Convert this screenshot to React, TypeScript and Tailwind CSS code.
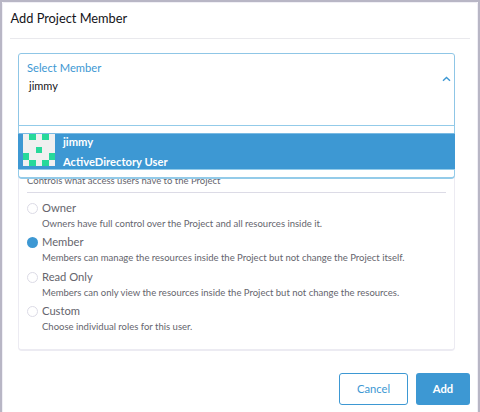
const roles = [
  { name: "Owner", text: "Owners have full control over the Project and all resources inside it." },
  { name: "Member", text: "Members can manage the resources inside the Project but not change the Project itself." },
  { name: "Read Only", text: "Members can only view the resources inside the Project but not change the resources." },
  { name: "Custom", text: "Choose individual roles for this user." },
];

function Avatar() {
  const cells = [[1, 0], [3, 0], [2, 2], [0, 3], [4, 3], [1, 4], [3, 4]];
  return (
    <svg className="ml-1 h-8 w-8 shrink-0" viewBox="0 0 5 5" shapeRendering="crispEdges">
      <rect width="5" height="5" fill="#f0f0f0" />
      {cells.map(([x, y]) => (
        <rect key={`${x}-${y}`} x={x} y={y} width="1" height="1" fill="#27d99b" />
      ))}
    </svg>
  );
}

function MemberSelect() {
  return (
    <div className="relative h-[73px] rounded-t-[3px] border border-[#8fc6e6] bg-white pl-2 pt-[6px]">
      <div className="text-[11.2px] leading-4 text-[#3d98d3]">Select Member</div>
      <div className="mt-[2px] pl-[2px] text-[11px] leading-4 text-[#141419]">jimmy</div>
      <svg className="absolute right-[3px] top-[22px] h-[6px] w-[9px]" viewBox="0 0 9 6" fill="none" stroke="#3d98d3" strokeWidth="1.4">
        <path d="M1 4.7 L4.5 1.4 L8 4.7" />
      </svg>
      <div className="absolute -left-px -right-px top-[71px] z-10 h-[54px] rounded-b-[4px] border border-b-2 border-[#93cbe9] bg-white pt-[7px]">
        <div className="-mx-px flex h-[37px] border-y border-[#79bae3] border-b-[#93cbe9] bg-[#3d98d3] pl-px text-white">
          <Avatar />
          <div className="ml-2 font-bold">
            <div className="-mt-px text-[11.2px] leading-[17px]">jimmy</div>
            <div className="mt-[3px] text-[11.2px] leading-[17px]">ActiveDirectory User</div>
          </div>
        </div>
      </div>
    </div>
  );
}

export default function App() {
  return (
    <main className="h-[412px] w-[480px] overflow-hidden border-2 border-b-0 border-[#b8b6c5] bg-white font-['Lato',sans-serif]">
      <div className="h-[412px] rounded-t-[2px] px-2 shadow-[inset_0_0_0_1px_#f0eff5]">
        <h1 className="h-[37px] border-b border-[#e9e9ed] pl-[0.5px] pt-[7px] text-[12.8px] leading-[18px] text-[#141419]">Add Project Member</h1>
        <div className="ml-2 mr-[15px] mt-[14px]">
          <MemberSelect />
          <section className="h-[225px] rounded-b-[4px] border border-b-2 border-t-0 border-[#ecebf2] px-2 pt-[47px] text-[#65656d]">
            <p className="h-[20px] border-b border-[#dcdbe6] text-[9.5px] leading-[15px]">Controls what access users have to the Project</p>
            <div className="pt-[7px]">
              {roles.map((role) => (
                <label key={role.name} className="flex h-[34.4px]">
                  <span className={role.name === "Member" ? "mt-[3px] h-[11px] w-[11px] shrink-0 rounded-full bg-[#3d98d3]" : "mt-[3px] h-[11px] w-[11px] shrink-0 rounded-full border border-[#dcdbe6]"} />
                  <span className="ml-1 whitespace-nowrap">
                    <span className="block text-[11.2px] leading-4">{role.name}</span>
                    <span className="block text-[9.5px] leading-[15px]">{role.text}</span>
                  </span>
                </label>
              ))}
            </div>
          </section>
        </div>
        <footer className="mt-[22px] flex justify-end gap-2 text-[11.2px]">
          <button className="h-8 w-[69px] rounded-[3px] border border-[#3d98d3] text-[#3d98d3]">Cancel</button>
          <button className="h-8 w-[54px] rounded-[3px] bg-[#3d98d3] font-bold text-white">Add</button>
        </footer>
      </div>
    </main>
  );
}
